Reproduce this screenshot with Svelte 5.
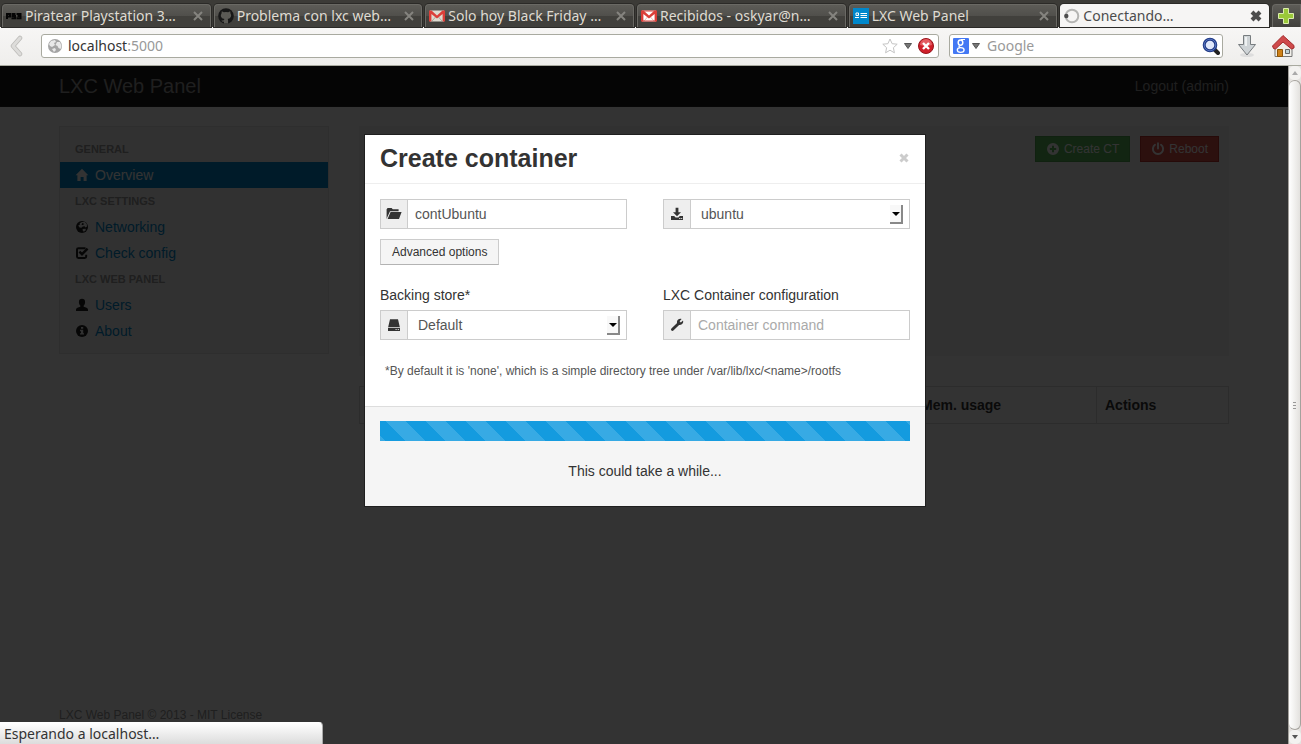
<script>
  const tabs = [
    { icon: 'ps3', title: 'Piratear Playstation 3…' },
    { icon: 'github', title: 'Problema con lxc web…' },
    { icon: 'gmail-grey', title: 'Solo hoy Black Friday …' },
    { icon: 'gmail', title: 'Recibidos - oskyar@n…' },
    { icon: 'lxc', title: 'LXC Web Panel' },
    { icon: 'throbber', title: 'Conectando…', active: true }
  ];

  const menu = [
    { heading: 'General', items: [{ icon: 'home', label: 'Overview', active: true }] },
    { heading: 'LXC Settings', items: [{ icon: 'globe', label: 'Networking' }, { icon: 'check', label: 'Check config' }] },
    { heading: 'LXC Web Panel', items: [{ icon: 'user', label: 'Users' }, { icon: 'info', label: 'About' }] }
  ];

  let name = $state('contUbuntu');
  let command = $state('');
</script>

{#snippet icon(kind)}
  <svg class="icon" viewBox="0 0 14 14" width="14" height="14" aria-hidden="true">
    {#if kind === 'home'}
      <path fill="currentColor" d="M7 .8 13.3 7.2H11.6V13H8.6V9H5.6V13H2.4V7.2H.6Z" />
    {:else if kind === 'globe'}
      <circle cx="7" cy="7" r="6" fill="currentColor" />
      <path fill="#f5f5f5" d="M6.2 2.2 9.6 1.8 11.8 4 12 6.5 10.5 7.6 9.6 6.2 7.8 6.6 6.4 7.8 4.6 7.4 3.2 5.6 5 4.6 4.6 3.4ZM7.6 9 10.6 8.8 10.8 10.2 8.8 11.8 7.8 10.8Z" />
      <path fill="currentColor" d="M7.2 3 8.8 3.4 8.4 5 6.6 5Z" />
    {:else if kind === 'check'}
      <path fill="none" stroke="currentColor" stroke-width="2" d="M10.5 2.2H3.4Q2 2.2 2 3.6v7Q2 12 3.4 12h6.4q1.4 0 1.4-1.4V8.8" />
      <path fill="none" stroke="currentColor" stroke-width="2.4" d="M4.4 5.6 7 8.2 12.6 2.6" />
    {:else if kind === 'user'}
      <path fill="currentColor" d="M7 .8c2 0 3.1 1.2 3.1 3.2 0 1.500-.5 2.800-1.400 3.600v1.200c2 .6 4.300 1.200 4.300 2.700V13H1v-1.500C1 10 3.300 9.400 5.300 8.800V7.600C4.400 6.800 3.900 5.500 3.900 4 3.900 2 5 .8 7 .8Z" />
    {:else if kind === 'info'}
      <circle cx="7" cy="7" r="6" fill="currentColor" />
      <path fill="#f5f5f5" d="M6 3h2.200v1.800H6zM5 5.800h3.200v3.400H9v1.400H5V9.200h1V7.200H5z" />
    {:else if kind === 'plus'}
      <path fill="currentColor" fill-rule="evenodd" d="M7 1a6 6 0 1 0 0 12A6 6 0 1 0 7 1ZM6 3.800h2V6h2.200v2H8v2.200H6V8H3.800V6H6Z" />
    {:else if kind === 'power'}
      <path fill="none" stroke="currentColor" stroke-width="1.900" stroke-linecap="round" d="M4 2.800a5.100 5.100 0 1 0 6 0M7 1.200V6.500" />
    {:else if kind === 'download'}
      <path fill="currentColor" d="M5.600.8h2.800v4.400H11L7 9.200 3 5.200h2.600ZM1 9h3.200L5.600 10.400h2.800L9.800 9H13v4H1ZM9.200 11v1h1.200v-1ZM11.200 11v1h1v-1Z" fill-rule="evenodd" />
    {:else if kind === 'wrench'}
      <path fill="none" stroke="currentColor" stroke-width="2.800" stroke-linecap="round" d="M2.400 11.600 8.600 5.400" />
      <path fill="currentColor" d="M11.600 1 9.600 3.200 10.800 4.400 13 2.600C13.800 5 12 7.200 9.600 7 7.600 6.800 6.600 5 7 3.400 7.500 1.400 9.600.2 11.600 1Z" />
    {/if}
  </svg>
{/snippet}

{#snippet favicon(kind)}
  <svg class="fav" viewBox="0 0 16 16" width="16" height="16" aria-hidden="true">
    {#if kind === 'ps3'}
      <path fill="none" stroke="#050505" stroke-width="2" d="M1 11V6h3v2.500H1M9.500 6H6.500v2H9v2.200H5.500M10.500 6H14.500v4.200h-4M11.500 8.100h3" />
    {:else if kind === 'github'}
      <circle cx="8" cy="8" r="7.800" fill="#171717" />
      <path fill="#5b5a55" d="M3.800 3.200 5.800 4.200Q8 3.700 10.200 4.200l2-1 .3 2.200q1 1.400.5 3.200-.7 2-3.400 2.500.6.700.5 1.700v2.800H6v-2q-2 .3-2.600-1.200l1.800.2L6 12q0-.6.500-.9-3-.5-3.600-2.600-.4-1.700.6-3Z" />
    {:else if kind === 'gmail-grey' || kind === 'gmail'}
      <path fill={kind === 'gmail' ? '#fff' : '#dedbd0'} d="M1 2.500h14v11H1z" />
      <path fill="none" stroke={kind === 'gmail' ? '#e9b5b0' : '#aaa89e'} d="M3 13 7 8.500M13 13 9 8.500" />
      <path fill="#db3f39" d="M0 2.500h2.500L8 7.500l5.500-5H16v11h-2.400V6L8 10.500 2.400 6v7.500H0z" />
      {#if kind === 'gmail'}<path fill="none" stroke="#db3f39" d="M1 3h14v10H1z" />{/if}
    {:else if kind === 'lxc'}
      <path fill="#08c" d="M0 0h16v16H0z" />
      <path fill="none" stroke="#fff" d="M7.500 5.500H14M7.500 7.500H14M7.500 9.500H14M2 9.500h4M3 5h2.500v2.500H3z" />
    {:else}
      <circle cx="8" cy="8" r="6.300" fill="none" stroke="#b5b5b3" stroke-width="2" />
      <circle cx="2.300" cy="8" r="2.200" fill="#4d4d4d" />
    {/if}
  </svg>
{/snippet}

<div class="browser">
  <header>
    <div class="tabs">
      {#each tabs as tab}
        <div class="tab" class:active={tab.active}>
          {@render favicon(tab.icon)}
          <span class="title">{tab.title}</span>
          <button class="tab-close" aria-label="Cerrar pestaña">
            <svg viewBox="0 0 12 12" width="12" height="12"><path d="M2 2 10 10M10 2 2 10" fill="none" stroke="currentColor" stroke-width={tab.active ? 4 : 2} /></svg>
          </button>
        </div>
      {/each}
      <button class="new-tab" aria-label="Nueva pestaña">
        <svg viewBox="0 0 16 16" width="16" height="16"><path d="M5.500.5h5v5h5v5h-5v5h-5v-5h-5v-5h5z" fill="#9bc93a" stroke="#dcedae" /></svg>
      </button>
    </div>
    <div class="toolbar">
      <button class="bare back" aria-label="Atrás">
        <svg viewBox="0 0 14 22" width="14" height="22"><path d="M11 3 4 11l7 8" fill="none" stroke="#bcbbb8" stroke-width="4.500" stroke-linecap="round" stroke-linejoin="round" /><path d="M11 3 4 11l7 8" fill="none" stroke="#dddcda" stroke-width="3" stroke-linecap="round" stroke-linejoin="round" /></svg>
      </button>
      <div class="field url">
        <svg viewBox="0 0 16 16" width="16" height="16" aria-hidden="true"><circle cx="8" cy="8" r="7" fill="#a5a5a5" /><path fill="#e9e9e9" d="M2 6 4 3l4-1 1 2-2 1 1 2-3 2-2-1zM10 4l3 0 1.500 4-1 3-2-1-1-2-2-1zM5 11l3-1 1 2-2 2z" /></svg>
        <span class="address" role="textbox" aria-label="Dirección" tabindex="0">localhost<span>:5000</span></span>
        <svg viewBox="0 0 16 16" width="16" height="16" aria-hidden="true"><path d="m8 1 2.100 4.700 5.100.5-3.800 3.500 1 5.100L8 12.200 3.600 14.800l1-5.100L.8 6.200l5.100-.5z" fill="#fff" stroke="#c4c4c4" stroke-linejoin="round" /></svg>
        <svg class="caret" viewBox="0 0 8 6" width="8" height="6" aria-hidden="true"><path d="M.5.5h7L4 5.500z" fill="#777" stroke="#555" /></svg>
        <svg viewBox="0 0 16 16" width="16" height="16" aria-hidden="true"><circle cx="8" cy="8" r="7.500" fill="#cf1f2a" stroke="#96151c" /><path d="M2 7a6 6 0 0 1 12 0Q8 9 2 7" fill="#e45b61" /><path d="m5 5 6 6M11 5l-6 6" stroke="#fff" stroke-width="2.400" /></svg>
      </div>
      <div class="field search">
        <svg viewBox="0 0 16 16" width="16" height="16" aria-hidden="true"><rect width="16" height="16" rx="1" fill="#4378f4" /><ellipse cx="7.500" cy="4.600" rx="2.300" ry="2.600" fill="none" stroke="#fff" stroke-width="1.500" /><path d="M8 1.500h4M6.500 7.500q-1.500 1.200 1 2" fill="none" stroke="#fff" stroke-width="1.200" /><ellipse cx="7.700" cy="12" rx="3.400" ry="2.300" fill="none" stroke="#fff" stroke-width="1.300" /></svg>
        <svg class="caret" viewBox="0 0 8 6" width="8" height="6" aria-hidden="true"><path d="M.5.5h7L4 5.500z" fill="#777" stroke="#555" /></svg>
        <input type="text" aria-label="Buscar" placeholder="Google" />
        <svg viewBox="0 0 18 18" width="18" height="18" aria-hidden="true"><path d="m12 12 4 4" stroke="#222" stroke-width="4" stroke-linecap="round" /><circle cx="8" cy="8" r="5.800" fill="#dfe7fa" stroke="#213a86" stroke-width="3" /><circle cx="8" cy="8" r="5.800" fill="none" stroke="#5473bd" /></svg>
      </div>
      <button class="bare" aria-label="Descargas">
        <svg viewBox="0 0 20 24" width="20" height="24"><ellipse cx="10" cy="21" rx="7" ry="2" fill="#ddd" /><path d="M6.500 1.500h7v9h5L10 21 1.500 10.500h5z" fill="#ced3d6" stroke="#777c7f" stroke-linejoin="round" /><path d="M8 3h2v9H8z" fill="#eef1f2" /></svg>
      </button>
      <button class="bare" aria-label="Inicio">
        <svg viewBox="0 0 24 24" width="24" height="24"><path d="M4 11v11.500h17V11l-8.500-7z" fill="#f1efe9" stroke="#777" /><path d="M12 1.500 1.500 12l1 2.500 2 .5L12 8l8.500 7 2.500-1V11.500z" fill="#cf4a4b" stroke="#a32a2c" stroke-linejoin="round" /><path d="M6.500 15.500h5v7h-5z" fill="#ce8118" stroke="#8e5406" /><path d="M14.500 15.500h4v4h-4z" fill="#bdd0d4" stroke="#666" /></svg>
      </button>
    </div>
  </header>

  <div class="viewport">
    <div class="page">
      <nav class="navbar">
        <div class="container">
          <a class="brand" href="#home">LXC Web Panel</a>
          <a class="logout" href="#logout">Logout (admin)</a>
        </div>
      </nav>
      <div class="container layout">
        <aside class="well">
          {#each menu as group}
            <h6>{group.heading}</h6>
            {#each group.items as item}
              <a href="#{item.icon}" class:active={item.active}>{@render icon(item.icon)}<span>{item.label}</span></a>
            {/each}
          {/each}
        </aside>
        <main>
          <section class="overview">
            <button class="btn success">{@render icon('plus')}Create CT</button>
            <button class="btn danger">{@render icon('power')}Reboot</button>
          </section>
          <table>
            <thead><tr><td class="wide"></td><th class="mem">Mem. usage</th><th>Actions</th></tr></thead>
          </table>
        </main>
      </div>
      <footer class="container">LXC Web Panel © 2013 - MIT License</footer>

      <div class="backdrop"></div>
      <div class="modal" role="dialog" aria-labelledby="modal-title">
        <div class="modal-header">
          <h3 id="modal-title">Create container</h3>
          <button class="close" aria-label="Close">
            <svg viewBox="0 0 10 10" width="10" height="10"><path d="m1.500 1.500 7 7M8.500 1.500l-7 7" stroke="#ccc" stroke-width="3" /></svg>
          </button>
        </div>
        <form class="modal-body">
          <div class="columns">
            <div class="group">
              <span class="addon">
                <svg viewBox="0 0 16 14" width="16" height="14" aria-hidden="true"><path fill="#333" d="M.6 12V2.200L1.600 1h4L6.800 2.200h5.800v2H4L1.400 10ZM4.600 5h11L13 12H1.600Z" /></svg>
              </span>
              <input type="text" aria-label="Name" bind:value={name} />
            </div>
            <div class="group">
              <span class="addon">{@render icon('download')}</span>
              <select aria-label="Template"><option>ubuntu</option></select>
              <span class="drop" aria-hidden="true"></span>
            </div>
          </div>
          <button type="button" class="btn plain">Advanced options</button>
          <div class="columns">
            <div>
              <label for="store">Backing store*</label>
              <div class="group">
                <span class="addon">
                  <svg viewBox="0 0 14 14" width="14" height="14" aria-hidden="true"><path fill="#333" fill-rule="evenodd" d="M3 1.200h8L12.800 9H1.200ZM1 9.800h12V13H1ZM8.600 11v1h1v-1ZM10.800 11v1h1v-1Z" /></svg>
                </span>
                <select id="store"><option>Default</option></select>
                <span class="drop" aria-hidden="true"></span>
              </div>
            </div>
            <div>
              <label for="command">LXC Container configuration</label>
              <div class="group">
                <span class="addon">{@render icon('wrench')}</span>
                <input id="command" type="text" placeholder="Container command" bind:value={command} />
              </div>
            </div>
          </div>
          <p class="help">*By default it is 'none', which is a simple directory tree under /var/lib/lxc/&lt;name&gt;/rootfs</p>
        </form>
        <div class="modal-footer">
          <div class="progress" role="progressbar" aria-label="Creating container"></div>
          <p>This could take a while...</p>
        </div>
      </div>
    </div>
    <div class="scrollbar" aria-hidden="true">
      <span class="arrow up"></span>
      <span class="thumb"><i></i><i></i><i></i></span>
      <span class="arrow down"></span>
    </div>
    <div class="status">Esperando a localhost…</div>
  </div>
</div>

<style>
  :global(body) { margin: 0; }
  .browser, .browser * { box-sizing: border-box; }
  .browser { display: flex; flex-direction: column; height: 100vh; overflow: hidden; font: 14px/20px "Liberation Sans", Arial, sans-serif; color: #333; }
  svg { display: block; flex: none; }
  button, input, select { font: inherit; color: inherit; margin: 0; }
  a { text-decoration: none; }

  header { font: 14px/20px "Noto Sans", "Open Sans", sans-serif; }
  .tabs { display: flex; gap: 3px; height: 27px; padding: 4px 0 0 2px; background: #3c3b37; }
  .tab { flex: 1; min-width: 0; display: flex; align-items: center; gap: 3px; padding: 0 6px 0 3px; border: 1px solid #6a6964; border-width: 1px 1px 0; border-radius: 4px 4px 0 0; background: linear-gradient(#5d5c57 0%, #504f4b 50%, #41403c 51%, #41403c 100%); box-shadow: 0 0 0 1px #2b2a27; color: #dfdbd2; }
  .title { flex: 1; min-width: 0; white-space: nowrap; overflow: hidden; }
  .tab-close { padding: 0; border: 0; background: none; color: #85847f; }
  .tab.active { background: #f6f5f4; border-color: #f6f5f4; color: #4c4c4c; }
  .tab.active .tab-close { color: #4c4c4c; }
  .new-tab { width: 29px; padding: 0 0 0 5px; border: 1px solid #6a6964; border-bottom: 0; border-radius: 4px 0 0 0; background: linear-gradient(#5d5c57, #41403c); }
  .toolbar { display: flex; align-items: center; gap: 10px; height: 39px; padding: 0 6px 0 5px; background: linear-gradient(#f7f6f5, #efeeec); border-bottom: 1px solid #a9aaa0; }
  .bare { margin-left: 4px; padding: 0; border: 0; background: none; }
  .back { margin-right: 8px; }
  .field { display: flex; align-items: center; gap: 5px; height: 24px; padding: 0 4px 0 5px; background: #fff; border: 1px solid #a9aaa0; border-radius: 3px; }
  .url { flex: 1; }
  .url .caret { margin: 0 1px; }
  .address { flex: 1; outline: 0; }
  .address span { color: #999; }
  .search { width: 274px; padding: 0 2px 0 3px; }
  .search .caret { margin: 0 2px 0 -2px; }
  .field input { flex: 1; min-width: 0; padding: 0; border: 0; outline: 0; background: none; }
  .search input::placeholder { color: #999; }

  .viewport { position: relative; flex: 1; min-height: 0; display: flex; }
  .page { position: relative; flex: 1; display: flex; flex-direction: column; background: #fff; }
  .container { width: 100%; max-width: 1170px; margin: 0 auto; }
  .navbar { background: #1b1b1b; height: 41px; display: flex; border-bottom: 1px solid #252525; }
  .navbar .container { display: flex; align-items: center; justify-content: space-between; }
  .navbar a { color: #999; }
  .brand { font-size: 20px; }
  .layout { flex: 1; display: flex; align-items: flex-start; gap: 30px; padding-top: 19px; }
  .well { width: 270px; padding: 9px 0; border: 1px solid #e3e3e3; background: #f5f5f5; }
  .well h6 { margin: 0; padding: 0 15px; font-size: 11px; line-height: 26px; color: #999; text-transform: uppercase; }
  .well a { display: flex; align-items: center; gap: 6px; height: 26px; padding: 0 15px; color: #08c; }
  .well .icon { color: #222; }
  .well a.active, .well a.active .icon { background: #08c; color: #fff; }
  main { flex: 1; display: flex; flex-direction: column; gap: 30px; }
  .overview { display: flex; justify-content: flex-end; align-items: flex-start; gap: 10px; height: 230px; padding: 10px; background: #f5f5f5; }
  .btn { display: flex; align-items: center; gap: 4px; height: 26px; padding: 0 10px; border: 1px solid #bbb; font-size: 12px; line-height: 16px; white-space: nowrap; }
  .success { background: #5bb75b; border-color: #51a351; color: #fff; }
  .danger { background: #da4f49; border-color: #bd362f; color: #fff; }
  .plain { padding: 0 11px; background: #f5f5f5; border-color: #ccc #ccc #b3b3b3; }
  table { width: 100%; table-layout: fixed; border-collapse: collapse; }
  th { height: 37px; padding: 0 8px; border: 1px solid #ddd; text-align: left; }
  td { border: 1px solid #ddd; }
  .wide { width: 553px; }
  .mem { width: 184px; }
  footer { padding-bottom: 19px; font-size: 12px; color: #999; }
  .backdrop { position: absolute; inset: 0; background: rgba(0, 0, 0, .8); }

  .modal { position: absolute; top: 68px; left: 50%; width: 562px; margin-left: -280px; border: 1px solid #1f1f1f; background: #fff; }
  .modal-header { display: flex; justify-content: space-between; align-items: center; padding: 8px 16px 10px 15px; border-bottom: 1px solid #eee; }
  h3 { margin: 0; font-size: 25px; line-height: 30px; }
  .close { padding: 0; border: 0; background: none; }
  .modal-body { display: flex; flex-direction: column; align-items: flex-start; gap: 10px; padding: 15px 15px 24px; }
  .columns { display: grid; grid-template-columns: 1fr 1fr; gap: 36px; width: 100%; }
  .group { position: relative; display: flex; height: 30px; border: 1px solid #ccc; color: #555; }
  .addon { display: flex; align-items: center; justify-content: center; width: 27px; background: #eee; border-right: 1px solid #ccc; color: #333; }
  .group input, .group select { flex: 1; min-width: 0; padding: 0 7px; border: 0; border-radius: 0; outline: 0; background: #fff; appearance: none; }
  .group select { padding-left: 10px; }
  .group input::placeholder { color: #aaa; opacity: 1; }
  .drop { position: absolute; right: 6px; top: 5px; display: grid; place-items: center; width: 13px; height: 19px; border: solid #888; border-width: 0 2px 2px 0; background: #f8f8f8; pointer-events: none; }
  .drop::before { content: ""; border: solid transparent; border-width: 4px 4px 0; border-top-color: #000; }
  label { display: block; padding: 10px 0 5px; margin: 0; }
  .help { margin: 10px 0 0; padding: 1px 5px; font-size: 12px; color: #555; }
  .modal-footer { padding: 14px 15px 25px; border-top: 1px solid #ddd; background: #f5f5f5; text-align: center; }
  .modal-footer p { margin: 20px 0 0; }
  .progress { height: 20px; background: #149bdf linear-gradient(45deg, rgba(255, 255, 255, .15) 25%, transparent 25%, transparent 50%, rgba(255, 255, 255, .15) 50%, rgba(255, 255, 255, .15) 75%, transparent 75%) 6px 0 / 40px 40px; }

  .scrollbar { display: flex; flex-direction: column; width: 13px; background: #e4e2df; border-left: 1px solid #a5a29d; }
  .arrow { display: grid; place-items: center; height: 14px; background: #f3f2f0; border-radius: 5px; }
  .arrow::before { content: ""; border: solid transparent; border-width: 0 3px 4px; border-bottom-color: #aaa; }
  .down::before { border-width: 4px 3px 0; border-top-color: #555; }
  .thumb { flex: 1; display: flex; flex-direction: column; align-items: center; justify-content: center; gap: 2px; border: 1px solid #a5a29d; border-left: 0; border-radius: 6px; background: linear-gradient(90deg, #fff, #e3e1de); }
  .thumb i { width: 3px; height: 1px; background: #999; }
  .status { position: absolute; left: 0; bottom: 0; width: 323px; height: 22px; padding: 1px 4px; border-top: 1px solid #fff; border-right: 1px solid #aaa; border-radius: 0 4px 0 0; background: linear-gradient(#fff, #dcdcdc); font-family: "Noto Sans", "Open Sans", sans-serif; }
</style>
